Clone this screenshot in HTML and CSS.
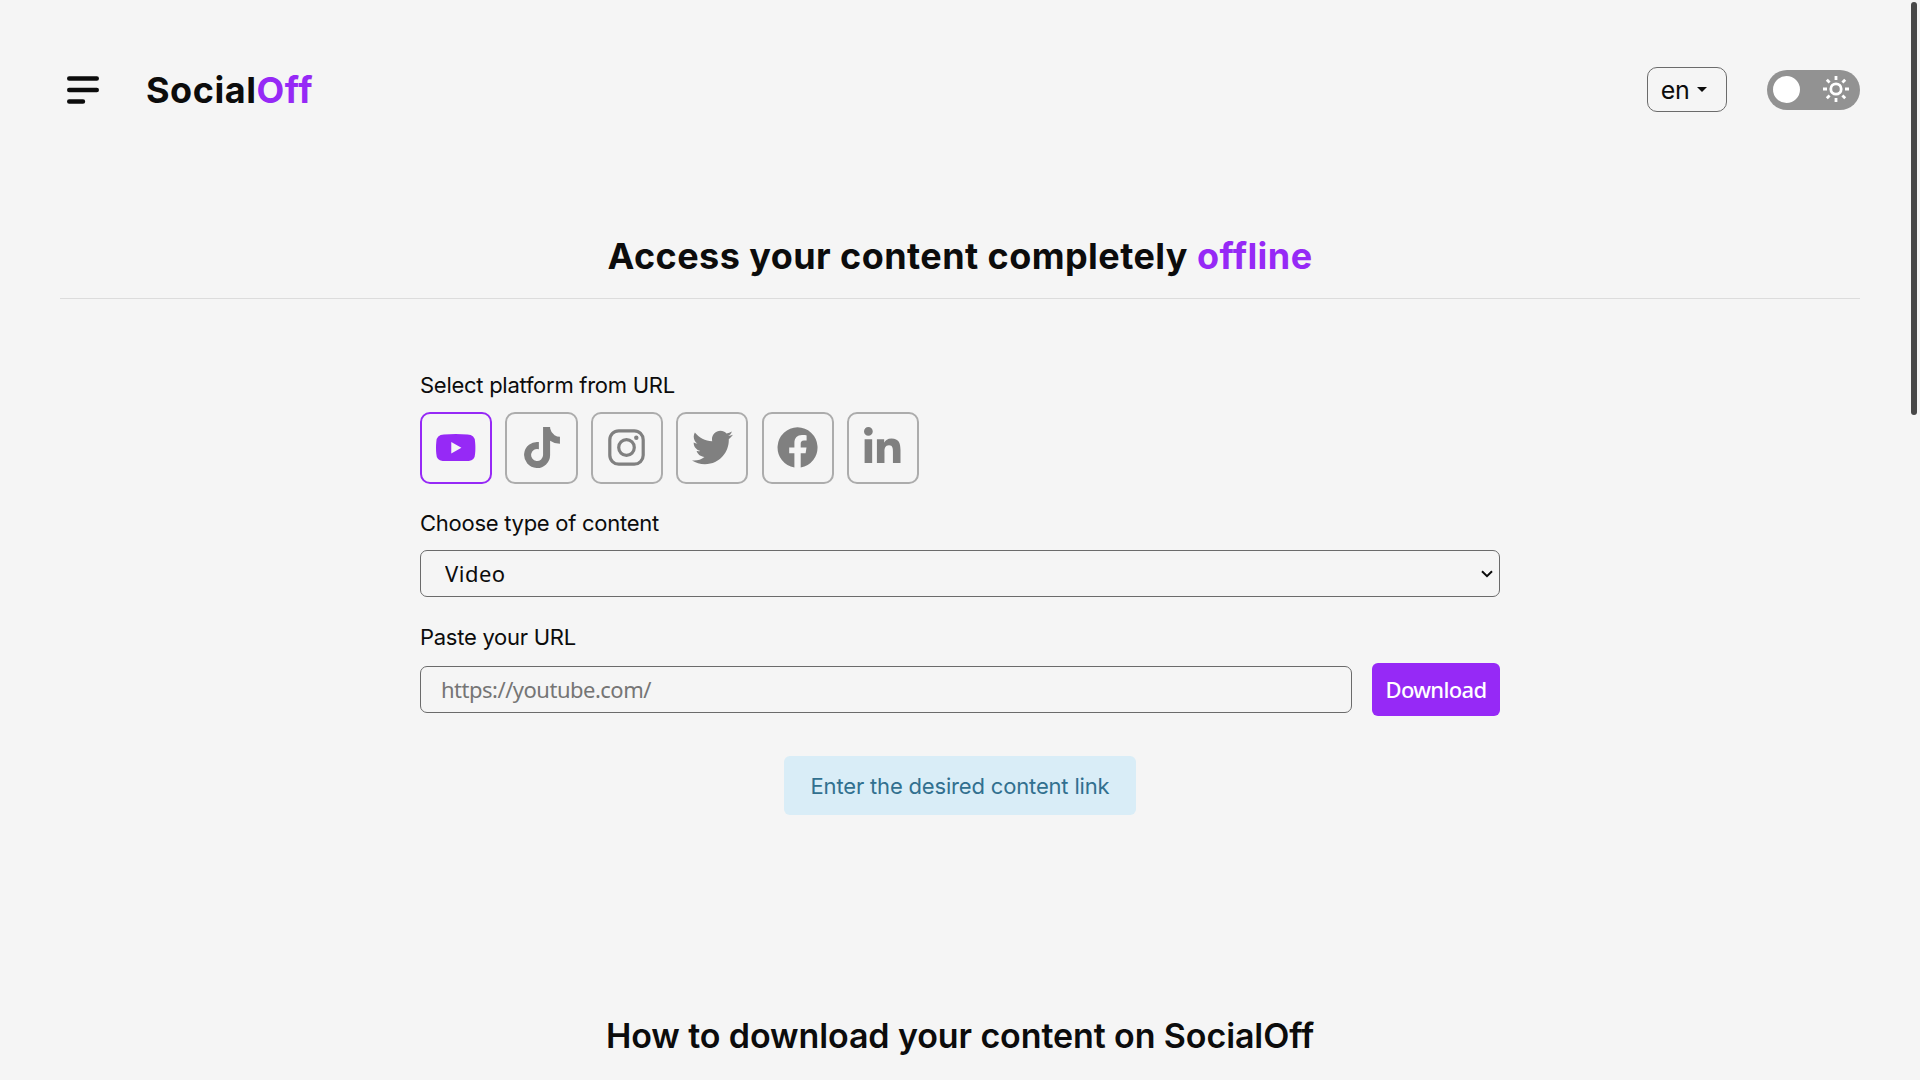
FILE: index.html
```html
<!DOCTYPE html>
<html lang="en">
<head>
<meta charset="utf-8">
<title>SocialOff</title>
<link rel="stylesheet" href="styles.css">
</head>
<body>
<div class="scrollbar-thumb"></div>
<header class="header">
  <svg class="menu" width="32" height="28" viewBox="0 0 32 28" stroke="#0c0c0c" stroke-width="4.4" stroke-linecap="round"><path d="M2.2 2.5H29.8M2.2 14H29.8M2.2 25.5H16"/></svg>
  <div class="logo">Social<span class="accent">Off</span></div>
  <button class="lang">en<span class="caret"></span></button>
  <div class="toggle">
    <span class="knob"></span>
    <svg width="26" height="26" viewBox="0 0 26 26" fill="none" stroke="#fff" stroke-width="2.8"><circle cx="13" cy="13" r="5.2"/><path d="M13 0V4M13 22V26M0 13H4M22 13H26M3.8 3.8L6.6 6.6M19.4 19.4L22.2 22.2M3.8 22.2L6.6 19.4M19.4 6.6L22.2 3.8"/></svg>
  </div>
</header>
<main class="main">
  <h1 class="title">Access your content completely <span class="accent">offline</span></h1>
  <form class="form">
    <div class="label">Select platform from URL</div>
    <div class="platforms">
      <div class="tile active"><svg width="39.4" height="27.6" viewBox="0 0 40 28"><path fill="currentColor" fill-rule="evenodd" d="M8 .5Q20-.5 32 .5Q39.5 .7 39.7 8Q40.3 14 39.7 20Q39.5 27.3 32 27.5Q20 28.5 8 27.5Q.5 27.3 .3 20Q-.3 14 .3 8Q.5 .7 8 .5ZM15.5 8.2V19.8L25.8 14Z"/></svg></div>
      <div class="tile tiktok"><svg width="36" height="41" viewBox="0 0 448 512"><path fill="currentColor" d="M448,209.91a210.06,210.06,0,0,1-122.77-39.25V349.38A162.55,162.55,0,1,1,185,188.31V278.2a74.62,74.62,0,1,0,52.23,71.18V0l88,0a121.18,121.18,0,0,0,1.86,22.17h0A122.18,122.18,0,0,0,381,102.39a121.43,121.43,0,0,0,67,20.14Z"/></svg></div>
      <div class="tile"><svg width="37" height="37" viewBox="0 0 37 37" fill="none" stroke="currentColor" stroke-width="3.2"><rect x="1.8" y="1.8" width="33.4" height="33.4" rx="9"/><circle cx="18.5" cy="18.5" r="7.8"/><circle cx="28.3" cy="8.7" r="2.2" fill="currentColor" stroke="none"/></svg></div>
      <div class="tile"><svg width="41" height="41" viewBox="0 0 512 512"><path fill="currentColor" d="M459.37 151.716c.325 4.548.325 9.097.325 13.645 0 138.72-105.583 298.558-298.558 298.558-59.452 0-114.68-17.219-161.137-47.106 8.447.974 16.568 1.299 25.34 1.299 49.055 0 94.213-16.568 130.274-44.832-46.132-.975-84.792-31.188-98.112-72.772 6.498.974 12.995 1.624 19.818 1.624 9.421 0 18.843-1.3 27.614-3.573-48.081-9.747-84.143-51.98-84.143-102.985v-1.299c13.969 7.797 30.214 12.67 47.431 13.319-28.264-18.843-46.781-51.005-46.781-87.391 0-19.492 5.197-37.36 14.294-52.954 51.655 63.675 129.3 105.258 216.365 109.807-1.624-7.797-2.599-15.918-2.599-24.04 0-57.828 46.782-104.934 104.934-104.934 30.213 0 57.502 12.67 76.67 33.137 23.715-4.548 46.456-13.32 66.599-25.34-7.798 24.366-24.366 44.833-46.132 57.827 21.117-2.273 41.584-8.122 60.426-16.243-14.292 20.791-32.161 39.308-52.628 54.253z"/></svg></div>
      <div class="tile"><svg width="41" height="41" viewBox="0 0 41 41"><path fill="currentColor" d="M20.5 .2A20.3 20.3 0 0 0 17.4 40.5V26.3H12.2V20.5H17.4V16C17.4 10.8 20.4 8 25 8C27.2 8 29.6 8.4 29.6 8.4V13.4H27C24.5 13.4 23.7 15 23.7 16.6V20.5H29.5L28.6 26.3H23.7V40.5A20.3 20.3 0 0 0 20.5 .2Z"/></svg></div>
      <div class="tile linkedin"><svg width="36.5" height="36.5" viewBox="0 0 448 448"><path fill="currentColor" d="M100.28 448H7.4V148.9h92.88zM53.79 108.1C24.09 108.1 0 83.5 0 53.8a53.79 53.79 0 0 1 107.58 0c0 29.7-24.1 54.3-53.79 54.3zM447.9 448h-92.68V302.4c0-34.7-.7-79.2-48.29-79.2-48.29 0-55.69 37.7-55.69 76.7V448h-92.78V148.9h89.08v40.8h1.3c12.4-23.5 42.69-48.3 87.88-48.3 94 0 111.28 61.9 111.28 142.3V448z"/></svg></div>
    </div>
    <label class="label" for="kind">Choose type of content</label>
    <select class="field select" id="kind"><option>Video</option></select>
    <label class="label" for="url">Paste your URL</label>
    <div class="url-row">
      <input class="field input" id="url" type="text" placeholder="https://youtube.com/">
      <button class="download" type="button">Download</button>
    </div>
    <div class="alert">Enter the desired content link</div>
  </form>
  <h2 class="howto">How to download your content on SocialOff</h2>
</main>
</body>
</html>
```
FILE: styles.css
```css
* { box-sizing: border-box; }
html { overflow: hidden; }
body {
  margin: 0;
  height: 1080px;
  overflow: hidden;
  background: #f5f5f5;
  color: #0c0c0c;
  font-family: Inter, sans-serif;
  font-size: 22px;
  font-weight: 400;
}
.accent { color: #9629f6; }
.scrollbar-thumb {
  position: absolute;
  top: 2px;
  right: 3px;
  width: 6px;
  height: 413px;
  border-radius: 3px;
  background: #484848;
}
.header {
  display: flex;
  align-items: center;
  height: 46px;
  margin: 67px 60px 0 67px;
}
.menu { overflow: visible; }
.logo {
  margin-left: 47px;
  font-size: 36px;
  line-height: 44px;
  font-weight: 700;
  letter-spacing: 0.55px;
}
.lang {
  display: flex;
  align-items: center;
  align-self: flex-start;
  justify-content: center;
  gap: 8px;
  width: 80px;
  height: 45px;
  margin-left: auto;
  padding: 0 6px 0 0;
  border: 1px solid #6b6b6b;
  border-radius: 10px;
  background: transparent;
  color: #0c0c0c;
  font: 25px Inter, sans-serif;
  letter-spacing: -0.4px;
}
.caret {
  border: 5px solid transparent;
  border-top-color: #0c0c0c;
  border-bottom: 0;
}
.toggle {
  display: flex;
  align-items: center;
  justify-content: space-between;
  width: 93px;
  height: 40px;
  margin-left: 40px;
  padding: 0 11px 2px 6px;
  border-radius: 20px;
  background: #929292;
}
.knob {
  width: 27px;
  height: 27px;
  border-radius: 50%;
  background: #fff;
}
.title {
  height: 65px;
  margin: 121px 60px 72px;
  border-bottom: 1px solid #dcdcdc;
  font-size: 36px;
  line-height: 44px;
  font-weight: 700;
  letter-spacing: 0.43px;
  text-align: center;
}
.form {
  display: flex;
  flex-direction: column;
  width: 1080px;
  margin: 0 auto;
}
.label {
  line-height: 28px;
  letter-spacing: -0.27px;
}
.platforms {
  display: flex;
  gap: 13.2px;
  margin: 13px 0 25px;
}
.tile {
  display: flex;
  align-items: center;
  justify-content: center;
  width: 72.2px;
  height: 72px;
  padding-bottom: 1px;
  border: 2px solid #acacac;
  border-radius: 10px;
  color: #808080;
}
.tile.active {
  border-color: #9629f6;
  color: #9629f6;
}
.tile.tiktok { padding: 0 0 2px 1px; }
.tile.linkedin { padding: 0 1px 6px 0; }
.field {
  height: 47px;
  border: 1px solid #6b6b6b;
  border-radius: 7px;
  background-color: #f5f5f5;
  font: 22px "Noto Sans", sans-serif;
}
.select {
  margin: 13px 0 26px;
  padding: 0 24px 2px;
  appearance: none;
  background-image: url("data:image/svg+xml,%3Csvg xmlns='http://www.w3.org/2000/svg' width='12' height='8' fill='none' stroke='%230c0c0c' stroke-width='2'%3E%3Cpath d='M1 1.2L6 6.2L11 1.2'/%3E%3C/svg%3E");
  background-repeat: no-repeat;
  background-position: right 6px center;
  color: #0c0c0c;
  letter-spacing: 0.5px;
}
.url-row {
  display: flex;
  align-items: center;
  gap: 20px;
  margin: 12px 0 40px;
}
.input {
  flex: 1;
  padding: 0 20px 2px;
  letter-spacing: -0.5px;
}
.download {
  width: 128px;
  height: 53px;
  padding: 0 0 2px;
  border: 0;
  border-radius: 6px;
  background: #9629f6;
  color: #fff;
  font: 500 22px "Noto Sans", sans-serif;
  letter-spacing: -0.65px;
}
.alert {
  align-self: center;
  width: 352px;
  height: 59px;
  border-radius: 6px;
  background: #d9edf7;
  color: #31708f;
  line-height: 60px;
  letter-spacing: -0.17px;
  text-align: center;
}
.howto {
  margin: 200px 0 0;
  font-size: 34px;
  line-height: 42px;
  font-weight: 600;
  letter-spacing: -0.1px;
  text-align: center;
}
```
